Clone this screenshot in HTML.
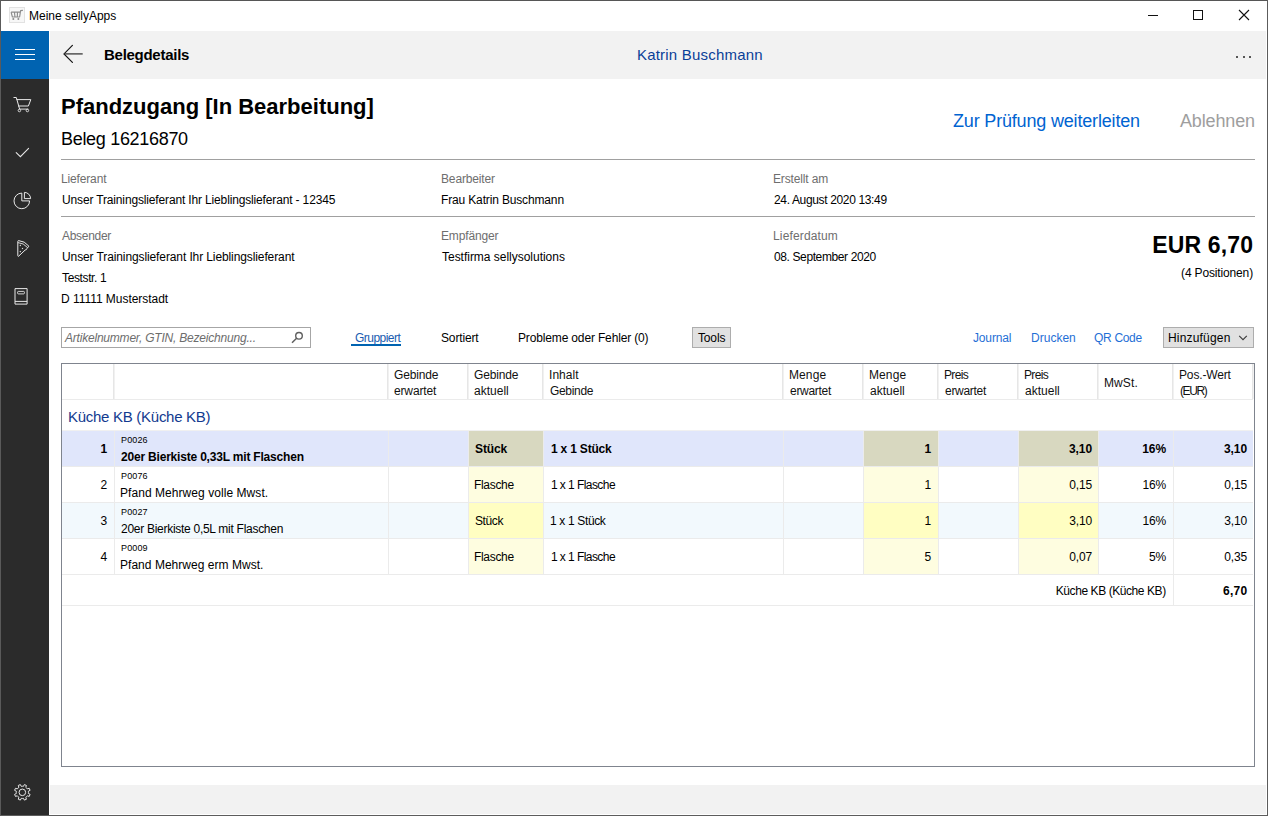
<!DOCTYPE html>
<html><head><meta charset="utf-8">
<style>
*{margin:0;padding:0;box-sizing:border-box}
html,body{width:1268px;height:816px;overflow:hidden;background:#fff}
body{font-family:"Liberation Sans",sans-serif;color:#000;position:relative}
.a{position:absolute;white-space:nowrap;z-index:5}
.b{position:absolute}
svg{position:absolute;overflow:visible}
</style></head><body>
<!-- window frame -->
<div class="b" style="left:0;top:0;width:1268px;height:1px;background:#565656;z-index:20"></div>
<div class="b" style="left:0;top:815px;width:1268px;height:1px;background:#5c5c5c;z-index:20"></div>
<div class="b" style="left:0;top:0;width:1px;height:816px;background:#5a5a5a;z-index:20"></div>
<div class="b" style="left:1267px;top:0;width:1px;height:816px;background:#5c5c5c;z-index:20"></div>

<!-- title bar icon -->
<div class="b" style="left:9px;top:7px;width:16px;height:16px;background:#f7f7f7;border:1px solid #e2e2e2"></div>
<svg style="left:9px;top:7px" width="16" height="16" viewBox="0 0 16 16">
 <path d="M2.1 5.1 L3.4 10 L10.6 10 L11.6 3.6 L13.9 3.4 M2.1 5.1 L11.3 5.1 M5.4 5.1 L6 10 M8.5 5.1 L8.3 10" stroke="#8c8c8c" stroke-width="1.15" fill="none" stroke-linejoin="round"/>
 <circle cx="4.3" cy="12.1" r="1" fill="#8c8c8c"/><circle cx="9.4" cy="12.1" r="1" fill="#8c8c8c"/>
</svg>
<!-- window controls -->
<div class="b" style="left:1148px;top:15px;width:10px;height:1px;background:#111"></div>
<div class="b" style="left:1193px;top:10px;width:10px;height:10px;border:1px solid #111"></div>
<svg style="left:1239px;top:10px" width="10" height="10" viewBox="0 0 10 10"><path d="M0 0 L10 10 M10 0 L0 10" stroke="#111" stroke-width="1.1"/></svg>

<!-- sidebar -->
<div class="b" style="left:1px;top:31px;width:48px;height:784px;background:#2b2b2b"></div>
<div class="b" style="left:1px;top:31px;width:48px;height:48px;background:#0063b1"></div>
<div class="b" style="left:15px;top:49px;width:20px;height:1px;background:#fff"></div>
<div class="b" style="left:15px;top:54px;width:20px;height:1px;background:#fff"></div>
<div class="b" style="left:15px;top:59px;width:20px;height:1px;background:#fff"></div>
<!-- cart -->
<svg style="left:10px;top:94px" width="24" height="20" viewBox="0 0 24 20">
 <path d="M3.9 3.5 L6.3 3.5 L9.6 15.1 L17.9 15.1 M6.9 5.6 L20.8 5.6 L18.4 12 L8.5 12" stroke="#e8e8e8" stroke-width="1" fill="none" stroke-linejoin="round" stroke-linecap="round"/>
 <circle cx="9.4" cy="16.5" r="1.25" stroke="#e8e8e8" stroke-width="0.9" fill="none"/>
 <circle cx="17.4" cy="16.5" r="1.25" stroke="#e8e8e8" stroke-width="0.9" fill="none"/>
</svg>
<!-- check -->
<svg style="left:10px;top:142px" width="24" height="20" viewBox="0 0 24 20"><path d="M6.2 10.6 L10.4 14.7 L18.6 6.3" stroke="#e8e8e8" stroke-width="1.05" fill="none" stroke-linecap="round"/></svg>
<!-- pie -->
<svg style="left:10px;top:188px" width="24" height="24" viewBox="0 0 24 24">
 <path d="M11.8 5.1 A7.8 7.8 0 1 0 19.6 12.9 L11.8 12.9 Z" stroke="#e8e8e8" stroke-width="1" fill="none"/>
 <path d="M14.4 4.4 A6.2 6.2 0 0 1 20.6 10.6 L14.4 10.6 Z" stroke="#e8e8e8" stroke-width="1" fill="none"/>
</svg>
<!-- pizza -->
<svg style="left:10px;top:236px" width="24" height="24" viewBox="0 0 24 24">
 <path d="M8.5 20.3 Q7.8 20.4 7.8 19.6 L7.8 5.4 Q7.8 4.6 8.6 4.6 Q14.6 4.9 18.9 10.2 L16.9 12.6 Q16.6 14 15.2 14 Z" stroke="#e8e8e8" stroke-width="1" fill="none" stroke-linejoin="round"/>
 <path d="M7.9 6.6 Q13.6 6.9 17.6 11.6" stroke="#e8e8e8" stroke-width="0.9" fill="none"/>
 <path d="M10.3 8.6 L11.1 9.4 L10.3 10.2 L9.5 9.4 Z M12.5 11.7 L13.3 12.5 L12.5 13.3 L11.7 12.5 Z M10.3 14.8 L11.1 15.6 L10.3 16.4 L9.5 15.6 Z" fill="#e8e8e8"/>
</svg>
<!-- book -->
<svg style="left:10px;top:284px" width="24" height="24" viewBox="0 0 24 24">
 <path d="M5 4.6 L17.1 4.6 L17.1 20.1 L5 20.1 Z M5 17.4 L17.1 17.4" stroke="#e8e8e8" stroke-width="1" fill="none" stroke-linejoin="round"/>
 <rect x="7.6" y="7.4" width="6.8" height="2.5" rx="0.8" stroke="#e8e8e8" stroke-width="0.9" fill="none"/>
</svg>
<!-- gear -->
<svg style="left:10px;top:780px" width="24" height="24" viewBox="0 0 24 24">
 <path d="M13.46 6.35 L14.35 4.60 L16.41 5.46 L15.81 7.32 A6.1 6.1 0 0 1 17.38 8.89 L17.38 8.89 L19.24 8.29 L20.10 10.35 L18.35 11.24 A6.1 6.1 0 0 1 18.35 13.46 L18.35 13.46 L20.10 14.35 L19.24 16.41 L17.38 15.81 A6.1 6.1 0 0 1 15.81 17.38 L15.81 17.38 L16.41 19.24 L14.35 20.10 L13.46 18.35 A6.1 6.1 0 0 1 11.24 18.35 L11.24 18.35 L10.35 20.10 L8.29 19.24 L8.89 17.38 A6.1 6.1 0 0 1 7.32 15.81 L7.32 15.81 L5.46 16.41 L4.60 14.35 L6.35 13.46 A6.1 6.1 0 0 1 6.35 11.24 L6.35 11.24 L4.60 10.35 L5.46 8.29 L7.32 8.89 A6.1 6.1 0 0 1 8.89 7.32 L8.89 7.32 L8.29 5.46 L10.35 4.60 L11.24 6.35 A6.1 6.1 0 0 1 13.46 6.35 Z" stroke="#e8e8e8" stroke-width="1" fill="none" stroke-linejoin="round"/>
 <circle cx="12.35" cy="12.35" r="3.3" stroke="#e8e8e8" stroke-width="1" fill="none"/>
</svg>

<!-- header -->
<div class="b" style="left:50px;top:31px;width:1216px;height:48px;background:#f2f2f2"></div>
<svg style="left:63px;top:45px" width="21" height="19" viewBox="0 0 21 19"><path d="M9.4 0.4 L1 8.9 L9.4 17.4" stroke="#141414" stroke-width="1.2" fill="none" stroke-linecap="round"/><path d="M1.2 8.9 L19.7 8.9" stroke="#3a3a3a" stroke-width="1.3" fill="none"/></svg>
<div class="b" style="left:1236px;top:55.5px;width:2px;height:2px;border-radius:1px;background:#222"></div>
<div class="b" style="left:1242.5px;top:55.5px;width:2px;height:2px;border-radius:1px;background:#222"></div>
<div class="b" style="left:1249px;top:55.5px;width:2px;height:2px;border-radius:1px;background:#222"></div>

<!-- footer -->
<div class="b" style="left:50px;top:785px;width:1216px;height:29px;background:#f2f2f2"></div>

<!-- rules -->
<div class="b" style="left:61px;top:159px;width:1194px;height:1px;background:#a0a0a0"></div>
<div class="b" style="left:61px;top:216px;width:1194px;height:1px;background:#a0a0a0"></div>

<!-- search box -->
<div class="b" style="left:61px;top:327px;width:250px;height:21px;border:1px solid #a6a6a6"></div>
<svg style="left:290px;top:330px" width="14" height="14" viewBox="0 0 14 14"><circle cx="9" cy="5.8" r="3.3" stroke="#5f5f5f" stroke-width="1.4" fill="none"/><path d="M6.6 8.2 L2 12.7" stroke="#5f5f5f" stroke-width="1.5"/></svg>
<div class="b" style="left:351px;top:344px;width:50px;height:2px;background:#0063b1"></div>
<div class="b" style="left:692px;top:327px;width:39px;height:21px;background:#e1e1e1;border:1px solid #adadad"></div>
<div class="b" style="left:1163px;top:327px;width:91px;height:21px;background:#e1e1e1;border:1px solid #adadad"></div>
<svg style="left:1238px;top:335px" width="10" height="6" viewBox="0 0 10 6"><path d="M1.2 0.8 L5 4.6 L8.8 0.8" stroke="#3a3a3a" stroke-width="1.1" fill="none"/></svg>

<!-- table -->
<div class="b" style="left:61px;top:363px;width:1194px;height:404px;border:1px solid #7f848e;z-index:3"></div>
<div class="b" style="left:62px;top:431px;width:1191px;height:35px;background:#e0e6fb"></div>
<div class="b" style="left:469px;top:431px;width:74px;height:35px;background:#d8d8c0"></div>
<div class="b" style="left:864px;top:431px;width:74px;height:35px;background:#d8d8c0"></div>
<div class="b" style="left:1019px;top:431px;width:79px;height:35px;background:#d8d8c0"></div>
<div class="b" style="left:62px;top:466px;width:1191px;height:1px;background:#ebebeb"></div>
<div class="b" style="left:62px;top:467px;width:1191px;height:35px;background:#ffffff"></div>
<div class="b" style="left:469px;top:467px;width:74px;height:35px;background:#fefde0"></div>
<div class="b" style="left:864px;top:467px;width:74px;height:35px;background:#fefde0"></div>
<div class="b" style="left:1019px;top:467px;width:79px;height:35px;background:#fefde0"></div>
<div class="b" style="left:62px;top:502px;width:1191px;height:1px;background:#ebebeb"></div>
<div class="b" style="left:62px;top:503px;width:1191px;height:35px;background:#f2f9fd"></div>
<div class="b" style="left:469px;top:503px;width:74px;height:35px;background:#fffec2"></div>
<div class="b" style="left:864px;top:503px;width:74px;height:35px;background:#fffec2"></div>
<div class="b" style="left:1019px;top:503px;width:79px;height:35px;background:#fffec2"></div>
<div class="b" style="left:62px;top:538px;width:1191px;height:1px;background:#ebebeb"></div>
<div class="b" style="left:62px;top:539px;width:1191px;height:35px;background:#ffffff"></div>
<div class="b" style="left:469px;top:539px;width:74px;height:35px;background:#fefde0"></div>
<div class="b" style="left:864px;top:539px;width:74px;height:35px;background:#fefde0"></div>
<div class="b" style="left:1019px;top:539px;width:79px;height:35px;background:#fefde0"></div>
<div class="b" style="left:62px;top:574px;width:1191px;height:1px;background:#ebebeb"></div>
<div class="b" style="left:114px;top:431px;width:1px;height:143px;background:#ebebeb"></div>
<div class="b" style="left:388px;top:431px;width:1px;height:143px;background:#ebebeb"></div>
<div class="b" style="left:468px;top:431px;width:1px;height:143px;background:#ebebeb"></div>
<div class="b" style="left:543px;top:431px;width:1px;height:143px;background:#ebebeb"></div>
<div class="b" style="left:783px;top:431px;width:1px;height:143px;background:#ebebeb"></div>
<div class="b" style="left:863px;top:431px;width:1px;height:143px;background:#ebebeb"></div>
<div class="b" style="left:938px;top:431px;width:1px;height:143px;background:#ebebeb"></div>
<div class="b" style="left:1018px;top:431px;width:1px;height:143px;background:#ebebeb"></div>
<div class="b" style="left:1098px;top:431px;width:1px;height:143px;background:#ebebeb"></div>
<div class="b" style="left:1173px;top:431px;width:1px;height:143px;background:#ebebeb"></div>
<div class="b" style="left:113px;top:364px;width:1px;height:35px;background:#e6e6e6"></div>
<div class="b" style="left:114px;top:364px;width:1px;height:35px;background:#f1f1f1"></div>
<div class="b" style="left:387px;top:364px;width:1px;height:35px;background:#e6e6e6"></div>
<div class="b" style="left:388px;top:364px;width:1px;height:35px;background:#f1f1f1"></div>
<div class="b" style="left:467px;top:364px;width:1px;height:35px;background:#e6e6e6"></div>
<div class="b" style="left:468px;top:364px;width:1px;height:35px;background:#f1f1f1"></div>
<div class="b" style="left:542px;top:364px;width:1px;height:35px;background:#e6e6e6"></div>
<div class="b" style="left:543px;top:364px;width:1px;height:35px;background:#f1f1f1"></div>
<div class="b" style="left:782px;top:364px;width:1px;height:35px;background:#e6e6e6"></div>
<div class="b" style="left:783px;top:364px;width:1px;height:35px;background:#f1f1f1"></div>
<div class="b" style="left:862px;top:364px;width:1px;height:35px;background:#e6e6e6"></div>
<div class="b" style="left:863px;top:364px;width:1px;height:35px;background:#f1f1f1"></div>
<div class="b" style="left:937px;top:364px;width:1px;height:35px;background:#e6e6e6"></div>
<div class="b" style="left:938px;top:364px;width:1px;height:35px;background:#f1f1f1"></div>
<div class="b" style="left:1017px;top:364px;width:1px;height:35px;background:#e6e6e6"></div>
<div class="b" style="left:1018px;top:364px;width:1px;height:35px;background:#f1f1f1"></div>
<div class="b" style="left:1097px;top:364px;width:1px;height:35px;background:#e6e6e6"></div>
<div class="b" style="left:1098px;top:364px;width:1px;height:35px;background:#f1f1f1"></div>
<div class="b" style="left:1172px;top:364px;width:1px;height:35px;background:#e6e6e6"></div>
<div class="b" style="left:1173px;top:364px;width:1px;height:35px;background:#f1f1f1"></div>
<div class="b" style="left:1252px;top:364px;width:1px;height:35px;background:#e6e6e6"></div>
<div class="b" style="left:1253px;top:364px;width:1px;height:35px;background:#f1f1f1"></div>
<div class="b" style="left:62px;top:430px;width:1191px;height:1px;background:#f0f0f0"></div>
<div class="b" style="left:62px;top:399px;width:1191px;height:1px;background:#ebebeb"></div>
<div class="b" style="left:1173px;top:575px;width:1px;height:30px;background:#ebebeb"></div>
<div class="b" style="left:62px;top:605px;width:1191px;height:1px;background:#ebebeb"></div>

<span class="a" style="top:10px;font-size:12px;line-height:12px;color:#000;letter-spacing:-0.007px;left:29.00px;">Meine sellyApps</span>
<span class="a" style="top:47px;font-size:15px;line-height:15px;color:#000;letter-spacing:-0.273px;font-weight:bold;left:104.00px;">Belegdetails</span>
<span class="a" style="top:47px;font-size:15px;line-height:15px;color:#0a3f98;letter-spacing:0.200px;left:637.00px;">Katrin Buschmann</span>
<span class="a" style="top:96px;font-size:22px;line-height:22px;color:#000;letter-spacing:0.000px;font-weight:bold;left:61.00px;">Pfandzugang [In Bearbeitung]</span>
<span class="a" style="top:130px;font-size:18px;line-height:18px;color:#000;letter-spacing:-0.308px;left:61.00px;">Beleg 16216870</span>
<span class="a" style="top:112px;font-size:18px;line-height:18px;color:#0063d1;letter-spacing:-0.174px;left:953.00px;">Zur Prüfung weiterleiten</span>
<span class="a" style="top:112px;font-size:18px;line-height:18px;color:#9e9e9e;letter-spacing:-0.143px;left:1180.00px;">Ablehnen</span>
<span class="a" style="top:173px;font-size:12px;line-height:12px;color:#6e6e6e;letter-spacing:-0.150px;left:61.00px;">Lieferant</span>
<span class="a" style="top:194px;font-size:12px;line-height:12px;color:#000;letter-spacing:-0.150px;left:62.00px;">Unser Trainingslieferant Ihr Lieblingslieferant - 12345</span>
<span class="a" style="top:173px;font-size:12px;line-height:12px;color:#6e6e6e;letter-spacing:-0.150px;left:441.00px;">Bearbeiter</span>
<span class="a" style="top:194px;font-size:12px;line-height:12px;color:#000;letter-spacing:-0.150px;left:441.00px;">Frau Katrin Buschmann</span>
<span class="a" style="top:173px;font-size:12px;line-height:12px;color:#6e6e6e;letter-spacing:-0.150px;left:773.00px;">Erstellt am</span>
<span class="a" style="top:194px;font-size:12px;line-height:12px;color:#000;letter-spacing:-0.350px;left:774.00px;">24. August 2020 13:49</span>
<span class="a" style="top:230px;font-size:12px;line-height:12px;color:#6e6e6e;letter-spacing:-0.293px;left:62.00px;">Absender</span>
<span class="a" style="top:251px;font-size:12px;line-height:12px;color:#000;letter-spacing:-0.107px;left:62.00px;">Unser Trainingslieferant Ihr Lieblingslieferant</span>
<span class="a" style="top:272px;font-size:12px;line-height:12px;color:#000;letter-spacing:-0.372px;left:62.00px;">Teststr. 1</span>
<span class="a" style="top:293px;font-size:12px;line-height:12px;color:#000;letter-spacing:-0.039px;left:61.00px;">D 11111 Musterstadt</span>
<span class="a" style="top:230px;font-size:12px;line-height:12px;color:#6e6e6e;letter-spacing:-0.150px;left:441.00px;">Empfänger</span>
<span class="a" style="top:251px;font-size:12px;line-height:12px;color:#000;letter-spacing:-0.020px;left:442.00px;">Testfirma sellysolutions</span>
<span class="a" style="top:230px;font-size:12px;line-height:12px;color:#6e6e6e;letter-spacing:0.150px;left:773.00px;">Lieferdatum</span>
<span class="a" style="top:251px;font-size:12px;line-height:12px;color:#000;letter-spacing:-0.385px;left:774.00px;">08. September 2020</span>
<span class="a" style="top:234px;font-size:23px;line-height:23px;color:#000;letter-spacing:0.143px;font-weight:bold;right:14.86px;">EUR 6,70</span>
<span class="a" style="top:267px;font-size:12px;line-height:12px;color:#000;letter-spacing:-0.150px;right:15.00px;">(4 Positionen)</span>
<span class="a" style="top:332px;font-size:12px;line-height:12px;color:#6d6d6d;letter-spacing:-0.209px;font-style:italic;left:65.00px;">Artikelnummer, GTIN, Bezeichnung...</span>
<span class="a" style="top:332px;font-size:12px;line-height:12px;color:#1a5cb0;letter-spacing:-0.525px;left:355.00px;">Gruppiert</span>
<span class="a" style="top:332px;font-size:12px;line-height:12px;color:#000;letter-spacing:-0.150px;left:441.00px;">Sortiert</span>
<span class="a" style="top:332px;font-size:12px;line-height:12px;color:#000;letter-spacing:-0.150px;left:518.00px;">Probleme oder Fehler (0)</span>
<span class="a" style="top:332px;font-size:12px;line-height:12px;color:#000;letter-spacing:-0.150px;left:698.00px;">Tools</span>
<span class="a" style="top:332px;font-size:12px;line-height:12px;color:#1f6fd6;letter-spacing:-0.150px;left:973.00px;">Journal</span>
<span class="a" style="top:332px;font-size:12px;line-height:12px;color:#1f6fd6;letter-spacing:0.017px;left:1031.00px;">Drucken</span>
<span class="a" style="top:332px;font-size:12px;line-height:12px;color:#1f6fd6;letter-spacing:-0.317px;left:1094.00px;">QR Code</span>
<span class="a" style="top:332px;font-size:12px;line-height:12px;color:#000;letter-spacing:0.183px;left:1168.00px;">Hinzufügen</span>
<span class="a" style="top:369px;font-size:12px;line-height:12px;color:#111;letter-spacing:-0.150px;left:394.00px;">Gebinde</span>
<span class="a" style="top:385px;font-size:12px;line-height:12px;color:#111;letter-spacing:-0.150px;left:394.00px;">erwartet</span>
<span class="a" style="top:369px;font-size:12px;line-height:12px;color:#111;letter-spacing:-0.150px;left:474.00px;">Gebinde</span>
<span class="a" style="top:385px;font-size:12px;line-height:12px;color:#111;letter-spacing:0.017px;left:474.00px;">aktuell</span>
<span class="a" style="top:369px;font-size:12px;line-height:12px;color:#111;letter-spacing:0.050px;left:549.00px;">Inhalt</span>
<span class="a" style="top:385px;font-size:12px;line-height:12px;color:#111;letter-spacing:-0.317px;left:550.00px;">Gebinde</span>
<span class="a" style="top:369px;font-size:12px;line-height:12px;color:#111;letter-spacing:0.100px;left:789.00px;">Menge</span>
<span class="a" style="top:385px;font-size:12px;line-height:12px;color:#111;letter-spacing:-0.293px;left:790.00px;">erwartet</span>
<span class="a" style="top:369px;font-size:12px;line-height:12px;color:#111;letter-spacing:0.100px;left:869.00px;">Menge</span>
<span class="a" style="top:385px;font-size:12px;line-height:12px;color:#111;letter-spacing:0.017px;left:870.00px;">aktuell</span>
<span class="a" style="top:369px;font-size:12px;line-height:12px;color:#111;letter-spacing:-0.650px;left:944.00px;">Preis</span>
<span class="a" style="top:385px;font-size:12px;line-height:12px;color:#111;letter-spacing:-0.293px;left:945.00px;">erwartet</span>
<span class="a" style="top:369px;font-size:12px;line-height:12px;color:#111;letter-spacing:-0.650px;left:1024.00px;">Preis</span>
<span class="a" style="top:385px;font-size:12px;line-height:12px;color:#111;letter-spacing:0.017px;left:1025.00px;">aktuell</span>
<span class="a" style="top:369px;font-size:12px;line-height:12px;color:#111;letter-spacing:-0.150px;left:1179.00px;">Pos.-Wert</span>
<span class="a" style="top:385px;font-size:12px;line-height:12px;color:#111;letter-spacing:-1.400px;left:1180.00px;">(EUR)</span>
<span class="a" style="top:377px;font-size:12px;line-height:12px;color:#111;letter-spacing:0.100px;left:1104.00px;">MwSt.</span>
<span class="a" style="top:409px;font-size:15px;line-height:15px;color:#123a8f;letter-spacing:-0.278px;left:68.00px;">Küche KB (Küche KB)</span>
<span class="a" style="top:443px;font-size:12px;line-height:12px;color:#000;letter-spacing:-0.100px;font-weight:bold;right:1161.00px;">1</span>
<span class="a" style="top:436px;font-size:9px;line-height:9px;color:#000;letter-spacing:0.150px;left:121.00px;">P0026</span>
<span class="a" style="top:451px;font-size:12px;line-height:12px;color:#000;letter-spacing:-0.194px;font-weight:bold;left:121.00px;">20er Bierkiste 0,33L mit Flaschen</span>
<span class="a" style="top:443px;font-size:12px;line-height:12px;color:#000;letter-spacing:-0.100px;font-weight:bold;left:475.00px;">Stück</span>
<span class="a" style="top:443px;font-size:12px;line-height:12px;color:#000;letter-spacing:-0.200px;font-weight:bold;left:551.00px;">1 x 1 Stück</span>
<span class="a" style="top:443px;font-size:12px;line-height:12px;color:#000;letter-spacing:-0.100px;font-weight:bold;right:337.00px;">1</span>
<span class="a" style="top:443px;font-size:12px;line-height:12px;color:#000;letter-spacing:-0.100px;font-weight:bold;right:176.00px;">3,10</span>
<span class="a" style="top:443px;font-size:12px;line-height:12px;color:#000;letter-spacing:-0.100px;font-weight:bold;right:102.00px;">16%</span>
<span class="a" style="top:443px;font-size:12px;line-height:12px;color:#000;letter-spacing:-0.100px;font-weight:bold;right:21.00px;">3,10</span>
<span class="a" style="top:479px;font-size:12px;line-height:12px;color:#000;letter-spacing:-0.150px;right:1161.00px;">2</span>
<span class="a" style="top:472px;font-size:9px;line-height:9px;color:#000;letter-spacing:0.150px;left:121.00px;">P0076</span>
<span class="a" style="top:487px;font-size:12px;line-height:12px;color:#000;letter-spacing:0.058px;left:120.00px;">Pfand Mehrweg volle Mwst.</span>
<span class="a" style="top:479px;font-size:12px;line-height:12px;color:#000;letter-spacing:-0.317px;left:474.00px;">Flasche</span>
<span class="a" style="top:479px;font-size:12px;line-height:12px;color:#000;letter-spacing:-0.567px;left:551.00px;">1 x 1 Flasche</span>
<span class="a" style="top:479px;font-size:12px;line-height:12px;color:#000;letter-spacing:-0.150px;right:337.00px;">1</span>
<span class="a" style="top:479px;font-size:12px;line-height:12px;color:#000;letter-spacing:-0.150px;right:176.00px;">0,15</span>
<span class="a" style="top:479px;font-size:12px;line-height:12px;color:#000;letter-spacing:-0.150px;right:102.00px;">16%</span>
<span class="a" style="top:479px;font-size:12px;line-height:12px;color:#000;letter-spacing:-0.150px;right:21.00px;">0,15</span>
<span class="a" style="top:515px;font-size:12px;line-height:12px;color:#000;letter-spacing:-0.150px;right:1161.00px;">3</span>
<span class="a" style="top:508px;font-size:9px;line-height:9px;color:#000;letter-spacing:0.150px;left:121.00px;">P0027</span>
<span class="a" style="top:523px;font-size:12px;line-height:12px;color:#000;letter-spacing:-0.279px;left:121.00px;">20er Bierkiste 0,5L mit Flaschen</span>
<span class="a" style="top:515px;font-size:12px;line-height:12px;color:#000;letter-spacing:-0.400px;left:475.00px;">Stück</span>
<span class="a" style="top:515px;font-size:12px;line-height:12px;color:#000;letter-spacing:-0.350px;left:550.00px;">1 x 1 Stück</span>
<span class="a" style="top:515px;font-size:12px;line-height:12px;color:#000;letter-spacing:-0.150px;right:337.00px;">1</span>
<span class="a" style="top:515px;font-size:12px;line-height:12px;color:#000;letter-spacing:-0.150px;right:176.00px;">3,10</span>
<span class="a" style="top:515px;font-size:12px;line-height:12px;color:#000;letter-spacing:-0.150px;right:102.00px;">16%</span>
<span class="a" style="top:515px;font-size:12px;line-height:12px;color:#000;letter-spacing:-0.150px;right:21.00px;">3,10</span>
<span class="a" style="top:551px;font-size:12px;line-height:12px;color:#000;letter-spacing:-0.150px;right:1161.00px;">4</span>
<span class="a" style="top:544px;font-size:9px;line-height:9px;color:#000;letter-spacing:0.150px;left:121.00px;">P0009</span>
<span class="a" style="top:559px;font-size:12px;line-height:12px;color:#000;letter-spacing:0.032px;left:120.00px;">Pfand Mehrweg erm Mwst.</span>
<span class="a" style="top:551px;font-size:12px;line-height:12px;color:#000;letter-spacing:-0.317px;left:474.00px;">Flasche</span>
<span class="a" style="top:551px;font-size:12px;line-height:12px;color:#000;letter-spacing:-0.567px;left:551.00px;">1 x 1 Flasche</span>
<span class="a" style="top:551px;font-size:12px;line-height:12px;color:#000;letter-spacing:-0.150px;right:337.00px;">5</span>
<span class="a" style="top:551px;font-size:12px;line-height:12px;color:#000;letter-spacing:-0.150px;right:176.00px;">0,07</span>
<span class="a" style="top:551px;font-size:12px;line-height:12px;color:#000;letter-spacing:-0.150px;right:102.00px;">5%</span>
<span class="a" style="top:551px;font-size:12px;line-height:12px;color:#000;letter-spacing:-0.150px;right:21.00px;">0,35</span>
<span class="a" style="top:585px;font-size:12px;line-height:12px;color:#000;letter-spacing:-0.428px;right:102.28px;">Küche KB (Küche KB)</span>
<span class="a" style="top:585px;font-size:12px;line-height:12px;color:#000;letter-spacing:0.233px;font-weight:bold;right:20.67px;">6,70</span>

</body></html>
